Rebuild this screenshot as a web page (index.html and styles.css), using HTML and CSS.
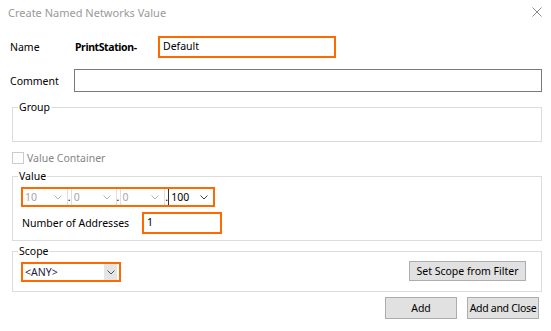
FILE: index.html
```html
<!DOCTYPE html>
<html lang="en">
<head>
  <meta charset="UTF-8" />
  <title>Create Named Networks Value</title>
  <link rel="stylesheet" href="styles.css">
</head>
<body>
  <div class="dialog">
    <div class="titlebar">
      <span class="title">Create Named Networks Value</span>
      <svg class="close" width="10" height="10" viewBox="0 0 10 10">
        <path d="M0.5 0.5 L9.5 9.5 M9.5 0.5 L0.5 9.5" stroke="#8a8a8a" stroke-width="1" fill="none"/>
      </svg>
    </div>

    <div class="form">
      <div class="row name-row">
        <span class="label">Name</span>
        <span class="prefix">PrintStation-</span>
        <div class="field hl name-field">Default</div>
      </div>

      <div class="row comment-row">
        <span class="label">Comment</span>
        <div class="field comment-field"></div>
      </div>

      <fieldset class="group">
        <legend>Group</legend>
        <div class="group-body"></div>
      </fieldset>

      <div class="check">
        <span class="box"></span>
        <span>Value Container</span>
      </div>

      <fieldset class="group value-box">
        <legend>Value</legend>
        <div class="ip hl">
          <div class="octet off"><span>10</span><svg width="8" height="5" viewBox="0 0 8 5"><polyline points="0.5,0.5 4,4 7.5,0.5" fill="none" stroke="#b0b0b0"/></svg></div>
          <span class="dot">.</span>
          <div class="octet off"><span>0</span><svg width="8" height="5" viewBox="0 0 8 5"><polyline points="0.5,0.5 4,4 7.5,0.5" fill="none" stroke="#b0b0b0"/></svg></div>
          <span class="dot">.</span>
          <div class="octet off"><span>0</span><svg width="8" height="5" viewBox="0 0 8 5"><polyline points="0.5,0.5 4,4 7.5,0.5" fill="none" stroke="#b0b0b0"/></svg></div>
          <span class="dot last">.</span>
          <div class="octet"><span>100</span><svg width="8" height="5" viewBox="0 0 8 5"><polyline points="0.5,0.5 4,4 7.5,0.5" fill="none" stroke="#404040"/></svg></div>
        </div>
        <div class="row count-row">
          <span class="count-label">Number of Addresses</span>
          <div class="field hl count-field">1</div>
        </div>
      </fieldset>

      <fieldset class="group scope-box">
        <legend>Scope</legend>
        <div class="scope-row">
          <div class="combo hl">
            <span>&lt;ANY&gt;</span>
            <span class="drop"><svg width="8" height="5" viewBox="0 0 8 5"><polyline points="0.5,0.5 4,4 7.5,0.5" fill="none" stroke="#505050"/></svg></span>
          </div>
          <button class="btn scope-btn">Set Scope from Filter</button>
        </div>
      </fieldset>

      <div class="actions">
        <button class="btn">Add</button>
        <button class="btn tight">Add and Close</button>
      </div>
    </div>
  </div>
</body>
</html>
```

FILE: styles.css
```css
* {
  box-sizing: border-box;
}
body {
  margin: 0;
  background: #fff;
  font-family: 'Noto Sans', sans-serif;
  font-size: 10.5px;
  color: #000;
}
.dialog {
  width: 551px;
  height: 331px;
}
.titlebar {
  height: 24px;
  display: flex;
  align-items: center;
  justify-content: space-between;
  padding: 0 9px 0 8px;
}
.title {
  color: #9a9a9a;
  font-size: 11px;
}
.form {
  padding: 12px 9px 0 10px;
}
.row {
  display: flex;
  align-items: center;
}
.label {
  width: 64px;
}
.name-row {
  height: 22px;
}
.prefix {
  width: 84px;
  padding-left: 1px;
  font-weight: bold;
  letter-spacing: -0.4px;
}
.field {
  height: 22px;
  padding-left: 3px;
  line-height: 17px;
}
.hl {
  border: 2px solid #ff6a00;
}
.name-field {
  width: 178px;
}
.comment-row {
  margin-top: 11px;
}
.comment-field {
  width: 468px;
  height: 23px;
  border: 1px solid #7a7a7a;
}
.group {
  margin: 8px 0 0 2px;
  padding: 0 8px;
  border: 1px solid #dcdcdc;
  min-width: 0;
}
.group legend {
  padding: 0 1px;
  margin-left: -3px;
  line-height: 14px;
}
.group-body {
  height: 27px;
}
.check {
  display: flex;
  align-items: center;
  height: 12px;
  margin: 10px 0 0 2px;
  color: #858585;
}
.check .box {
  width: 12px;
  height: 12px;
  border: 1px solid #cccccc;
  margin-right: 3px;
}
.value-box {
  margin-top: 5px;
  padding-top: 4px;
  padding-bottom: 6px;
}
.ip {
  display: flex;
  width: 194px;
  height: 20px;
}
.octet {
  flex: 1;
  display: flex;
  align-items: center;
  justify-content: space-between;
  padding: 0 5px 0 2px;
  line-height: 16px;
}
.octet.off {
  color: #a6a6a6;
}
.dot {
  width: 5px;
  text-align: center;
  border-left: 1px solid #dedede;
  border-right: 1px solid #dedede;
  line-height: 16px;
}
.dot.last {
  border-right-color: #303030;
}
.count-row {
  margin-top: 5px;
}
.count-label {
  width: 121px;
  padding-left: 1px;
}
.count-field {
  width: 80px;
}
.scope-box {
  margin-top: 3px;
  padding: 4px 15px 9px 8px;
}
.scope-row {
  display: flex;
  align-items: flex-start;
  justify-content: space-between;
}
.combo {
  width: 100px;
  height: 20px;
  display: flex;
  align-items: center;
  padding: 0 2px 0 2px;
  color: #1a1a3a;
}
.drop {
  margin-left: auto;
  width: 13px;
  height: 16px;
  background: #e5e5e5;
  display: flex;
  align-items: center;
  justify-content: center;
}
.btn {
  height: 22px;
  width: 72px;
  padding: 0;
  background: #e1e1e1;
  border: 1px solid #adadad;
  font-family: inherit;
  font-size: 10.5px;
  color: #000;
  white-space: nowrap;
  overflow: hidden;
}
.btn.tight {
  letter-spacing: -0.3px;
}
.scope-btn {
  width: 117px;
  height: 20px;
  margin-top: -1px;
}
.actions {
  display: flex;
  justify-content: flex-end;
  gap: 10px;
  margin: 5px 3px 0 0;
}
```
